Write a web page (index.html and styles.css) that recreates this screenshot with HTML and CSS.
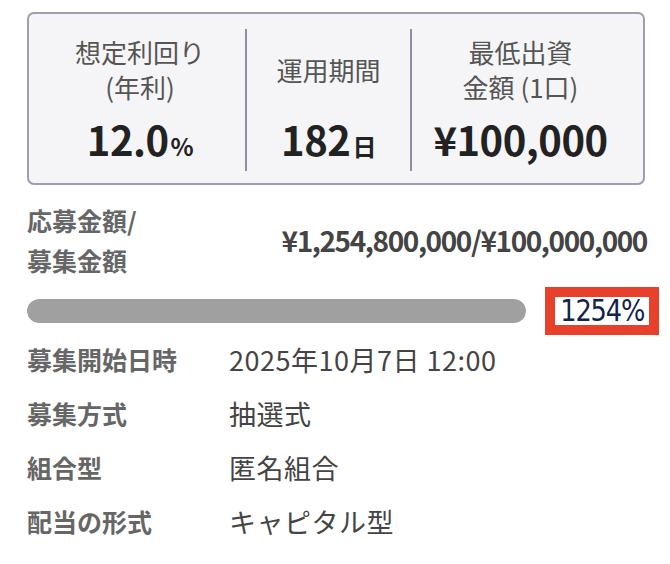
FILE: index.html
```html
<!DOCTYPE html>
<html lang="ja">
<head>
<meta charset="utf-8">
<link rel="stylesheet" href="styles.css">
</head>
<body>
<div class="page">
  <div class="summary">
    <div class="col col-1">
      <div class="label">想定利回り<br>(年利)</div>
      <div class="value">12.0<span class="unit">%</span></div>
    </div>
    <div class="col col-2">
      <div class="label">運用期間</div>
      <div class="value">182<span class="unit">日</span></div>
    </div>
    <div class="col col-3">
      <div class="label">最低出資<br>金額 (1口)</div>
      <div class="value">¥100,000</div>
    </div>
  </div>

  <div class="amount-row">
    <div class="amount-label">応募金額/<br>募集金額</div>
    <div class="amount-value">¥1,254,800,000/¥100,000,000</div>
  </div>

  <div class="progress-row">
    <div class="bar"><div class="bar-fill" style="width:100%"></div></div>
    <div class="percent-box"><span class="percent">1254%</span></div>
  </div>

  <dl class="details">
    <div class="detail"><dt>募集開始日時</dt><dd>2025年10月7日 12:00</dd></div>
    <div class="detail"><dt>募集方式</dt><dd>抽選式</dd></div>
    <div class="detail"><dt>組合型</dt><dd>匿名組合</dd></div>
    <div class="detail"><dt>配当の形式</dt><dd>キャピタル型</dd></div>
  </dl>
</div>
</body>
</html>
```

FILE: styles.css
```css
* { box-sizing: border-box; }
html, body { margin: 0; padding: 0; background: #fff; }
body {
  font-family: "Noto Sans CJK JP", "Noto Sans", sans-serif;
  color: #444;
  width: 670px;
  height: 564px;
  overflow: hidden;
}
.page {
  padding: 12px 25px 0 27px;
}
.summary {
  display: grid;
  grid-template-columns: 210px 165px 1fr;
  height: 173px;
  background: #f5f5f7;
  border: 2px solid #9c9eb1;
  border-radius: 7px;
  padding: 15px 14px 15px 6px;
}
.col {
  display: flex;
  flex-direction: column;
  align-items: center;
  padding-top: 5px;
}
.col-2, .col-3 { border-left: 2px solid #8e91a6; }
.label {
  height: 70px;
  display: flex;
  align-items: center;
  justify-content: center;
  text-align: center;
  font-size: 26px;
  line-height: 35px;
  color: #555;
}
.value {
  margin-top: 10px;
  font-size: 40px;
  line-height: 50px;
  font-weight: 700;
  color: #222;
  letter-spacing: -0.5px;
}
.unit { font-size: 24px; margin-left: 2px; }

.amount-row {
  display: flex;
  justify-content: space-between;
  align-items: center;
  margin-top: 14px;
  height: 81px;
}
.amount-label {
  font-size: 25px;
  line-height: 40px;
  font-weight: 700;
  color: #666;
}
.amount-value {
  font-size: 28px;
  font-weight: 700;
  color: #444;
  letter-spacing: -1.4px;
  margin-right: -2px;
}
.progress-row {
  display: flex;
  align-items: center;
  margin-top: 7px;
  height: 48px;
  margin-right: -15px;
}
.bar {
  width: 499px;
  height: 24px;
  border-radius: 12px;
  background: #e4e4e4;
  overflow: hidden;
}
.bar-fill { height: 100%; background: #a0a0a0; border-radius: 12px; }
.percent-box {
  margin-left: 19px;
  border: 10px solid #e8412b;
  background: #fff;
  width: 114px;
  height: 48px;
  display: flex;
  align-items: center;
  justify-content: center;
}
.percent {
  font-family: "DejaVu Sans Condensed", "DejaVu Sans", sans-serif;
  font-size: 30px;
  line-height: 28px;
  color: #13234a;
  letter-spacing: -1.2px;
  transform: scaleX(0.95);
}
.details {
  margin: -3px 0 0;
  padding: 0;
}
.detail {
  display: flex;
  align-items: center;
  height: 54px;
}
.detail dt {
  width: 202px;
  font-size: 25px;
  font-weight: 700;
  color: #666;
}
.detail dd {
  margin: 0;
  font-size: 27px;
  letter-spacing: 0.5px;
  color: #444;
}
```
